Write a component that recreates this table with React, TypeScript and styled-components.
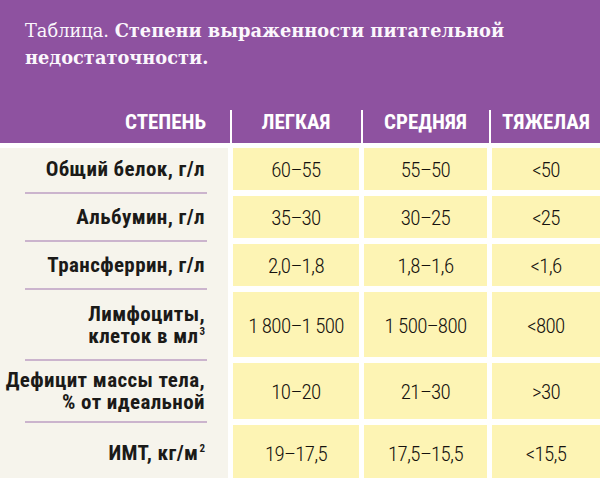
import React from "react";
import styled, { createGlobalStyle } from "styled-components";

const GlobalStyle = createGlobalStyle`
  html, body { margin: 0; padding: 0; background: #ffffff; }
  * { box-sizing: border-box; }
`;

const COLS = "228px 5px 126px 5px 123px 5px 1fr";
const COND = `"Roboto Condensed", "Roboto", "DejaVu Sans Condensed", sans-serif`;

const Page = styled.div`
  width: 600px;
  height: 478px;
  overflow: hidden;
  background: #ffffff;
`;

const Header = styled.header`
  background: #8e52a0;
  padding-top: 17px;
`;

const Title = styled.h1`
  margin: 0 0 39px 0;
  padding-left: 25px;
  font-family: "DejaVu Serif", "Liberation Serif", serif;
  font-size: 17.8px;
  line-height: 27px;
  font-weight: 400;
  color: #fbf7fc;
`;

const Bold = styled.span`
  font-weight: 700;
`;

const HeaderRow = styled.div`
  display: grid;
  grid-template-columns: ${COLS};
  height: 33px;
`;

const HeaderCell = styled.div<{ $align?: "right" | "center" }>`
  font-family: ${COND};
  font-stretch: condensed;
  font-weight: 700;
  font-size: 21px;
  line-height: 1;
  color: #ffffff;
  padding-top: 2px;
  text-align: ${(p) => p.$align ?? "center"};
  padding-right: ${(p) => (p.$align === "right" ? "22px" : "0")};
  white-space: nowrap;
`;

const DividerSlot = styled.div`
  display: flex;
  justify-content: center;
`;

const Divider = styled.div`
  width: 2px;
  height: 100%;
  background: #ffffff;
`;

const Body = styled.div`
  padding-top: 5px;
  background: #ffffff;
`;

const Row = styled.div<{ $h: number; $last?: boolean }>`
  display: grid;
  grid-template-columns: ${COLS};
  height: ${(p) => p.$h + (p.$last ? 0 : 6)}px;
`;

const LabelCell = styled.div<{ $last?: boolean }>`
  background-color: #f6f4ec;
  background-image: ${(p) =>
    p.$last ? "none" : "linear-gradient(#cbb4cd, #cbb4cd)"};
  background-repeat: no-repeat;
  background-size: 182px 2px;
  background-position: 25px calc(100% - 2px);
  padding: 0 23px ${(p) => (p.$last ? 0 : 6)}px 0;
  display: flex;
  flex-direction: column;
  justify-content: center;
  text-align: right;
  font-family: ${COND};
  font-stretch: condensed;
  font-weight: 700;
  font-size: 21px;
  line-height: 22px;
  letter-spacing: 0.4px;
  color: #1b1a18;
  white-space: nowrap;
`;

const Gap = styled.div``;

const ValueCell = styled.div<{ $h: number }>`
  height: ${(p) => p.$h}px;
  background: #fdf4b4;
  display: flex;
  align-items: center;
  justify-content: center;
  font-family: ${COND};
  font-stretch: condensed;
  font-weight: 300;
  font-size: 21px;
  letter-spacing: -0.7px;
  color: #15120f;
  padding-top: 2px;
  white-space: nowrap;
`;

const Sup = styled.sup`
  font-size: 11px;
  line-height: 0;
  vertical-align: 8px;
  margin-left: 1px;
  letter-spacing: 0;
`;

type RowData = {
  h: number;
  label: React.ReactNode;
  values: [string, string, string];
};

const rows: RowData[] = [
  { h: 42, label: "Общий белок, г/л", values: ["60–55", "55–50", "<50"] },
  { h: 42, label: "Альбумин, г/л", values: ["35–30", "30–25", "<25"] },
  { h: 42, label: "Трансферрин, г/л", values: ["2,0–1,8", "1,8–1,6", "<1,6"] },
  {
    h: 65,
    label: (
      <>
        Лимфоциты,
        <br />
        клеток в мл<Sup>3</Sup>
      </>
    ),
    values: ["1 800–1 500", "1 500–800", "<800"],
  },
  {
    h: 56,
    label: (
      <>
        Дефицит массы тела,
        <br />% от идеальной
      </>
    ),
    values: ["10–20", "21–30", ">30"],
  },
  {
    h: 56,
    label: (
      <>
        ИМТ, кг/м<Sup>2</Sup>
      </>
    ),
    values: ["19–17,5", "17,5–15,5", "<15,5"],
  },
];

export default function App() {
  return (
    <>
      <GlobalStyle />
      <Page>
        <Header>
          <Title>
            Таблица. <Bold>Степени выраженности питательной</Bold>
            <br />
            <Bold>недостаточности.</Bold>
          </Title>
          <HeaderRow>
            <HeaderCell $align="right">СТЕПЕНЬ</HeaderCell>
            <DividerSlot>
              <Divider />
            </DividerSlot>
            <HeaderCell>ЛЕГКАЯ</HeaderCell>
            <DividerSlot>
              <Divider />
            </DividerSlot>
            <HeaderCell>СРЕДНЯЯ</HeaderCell>
            <DividerSlot>
              <Divider />
            </DividerSlot>
            <HeaderCell>ТЯЖЕЛАЯ</HeaderCell>
          </HeaderRow>
        </Header>
        <Body>
          {rows.map((r, i) => {
            const last = i === rows.length - 1;
            return (
              <Row key={i} $h={r.h} $last={last}>
                <LabelCell $last={last}>
                  <div>{r.label}</div>
                </LabelCell>
                <Gap />
                <ValueCell $h={r.h}>{r.values[0]}</ValueCell>
                <Gap />
                <ValueCell $h={r.h}>{r.values[1]}</ValueCell>
                <Gap />
                <ValueCell $h={r.h}>{r.values[2]}</ValueCell>
              </Row>
            );
          })}
        </Body>
      </Page>
    </>
  );
}
